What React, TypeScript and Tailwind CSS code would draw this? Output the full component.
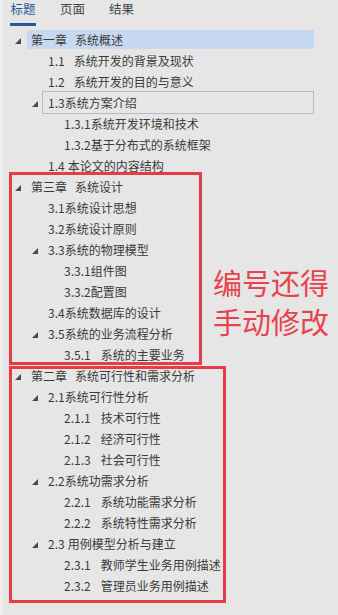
import React from 'react';

type Item = {
  level: 1 | 2 | 3;
  num: string;
  title: string;
  gap?: string;
  open?: boolean;
  selected?: boolean;
  focused?: boolean;
};

const items: Item[] = [
  { level: 1, num: '第一章', title: '系统概述', gap: 'ml-[8px]', open: true, selected: true },
  { level: 2, num: '1.1', title: '系统开发的背景及现状', gap: 'ml-[9px]' },
  { level: 2, num: '1.2', title: '系统开发的目的与意义', gap: 'ml-[9px]' },
  { level: 2, num: '1.3', title: '系统方案介绍', open: true, focused: true },
  { level: 3, num: '1.3.1', title: '系统开发环境和技术' },
  { level: 3, num: '1.3.2', title: '基于分布式的系统框架' },
  { level: 2, num: '1.4', title: '本论文的内容结构', gap: 'ml-[3px]' },
  { level: 1, num: '第三章', title: '系统设计', gap: 'ml-[8px]', open: true },
  { level: 2, num: '3.1', title: '系统设计思想' },
  { level: 2, num: '3.2', title: '系统设计原则' },
  { level: 2, num: '3.3', title: '系统的物理模型', open: true },
  { level: 3, num: '3.3.1', title: '组件图' },
  { level: 3, num: '3.3.2', title: '配置图' },
  { level: 2, num: '3.4', title: '系统数据库的设计' },
  { level: 2, num: '3.5', title: '系统的业务流程分析', open: true },
  { level: 3, num: '3.5.1', title: '系统的主要业务', gap: 'ml-[10px]' },
  { level: 1, num: '第二章', title: '系统可行性和需求分析', gap: 'ml-[8px]', open: true },
  { level: 2, num: '2.1', title: '系统可行性分析', open: true },
  { level: 3, num: '2.1.1', title: '技术可行性', gap: 'ml-[10px]' },
  { level: 3, num: '2.1.2', title: '经济可行性', gap: 'ml-[10px]' },
  { level: 3, num: '2.1.3', title: '社会可行性', gap: 'ml-[10px]' },
  { level: 2, num: '2.2', title: '系统功需求分析', open: true },
  { level: 3, num: '2.2.1', title: '系统功能需求分析', gap: 'ml-[10px]' },
  { level: 3, num: '2.2.2', title: '系统特性需求分析', gap: 'ml-[10px]' },
  { level: 2, num: '2.3', title: '用例模型分析与建立', gap: 'ml-[3px]', open: true },
  { level: 3, num: '2.3.1', title: '教师学生业务用例描述', gap: 'ml-[10px]' },
  { level: 3, num: '2.3.2', title: '管理员业务用例描述', gap: 'ml-[10px]' },
];

// left padding of the expander slot, per level (page has a 3px strip on the left)
const indent = { 1: 'pl-[6px]', 2: 'pl-[23px]', 3: 'pl-[39px]' };

function Expander() {
  return (
    <svg width="6" height="6" viewBox="0 0 6 6" className="ml-[6px] mt-[2px]">
      <polygon points="6,0 6,6 0,6" fill="#4a4a4a" />
    </svg>
  );
}

function Row({ item }: { item: Item }) {
  return (
    <div className={`flex h-[21px] items-center pr-[24px] ${indent[item.level]}`}>
      <div className="flex h-full w-[16px] shrink-0 items-center">
        {item.open && <Expander />}
      </div>
      <div
        className={
          item.selected
            ? 'ml-[2px] flex h-[19px] flex-1 items-center bg-[#c6d9f1] pl-[4px]'
            : item.focused
              ? 'flex h-[23px] flex-1 items-center border border-[#b5b9cb] pl-[5px]'
              : 'flex h-full flex-1 items-center pl-[6px]'
        }
      >
        <span className="whitespace-nowrap">{item.num}</span>
        <span className={`whitespace-nowrap ${item.gap ?? ''}`}>{item.title}</span>
      </div>
    </div>
  );
}

export default function App() {
  return (
    <div className="flex h-[615px] w-[338px] overflow-hidden bg-[#e6e6e6] font-['Noto_Sans_CJK_SC',sans-serif] text-[12px] leading-[16px] text-[#3a3a3a]">
      <div className="w-[3px] shrink-0 bg-[#eeeeee]" />
      <div className="relative flex-1">
        <div className="flex h-[29px] gap-[24px] pl-[7px] pt-px text-[12.5px]">
          <div className="flex w-[26px] flex-col items-center">
            <span className="text-[#2b579a]">标题</span>
            <div className="mt-[6px] h-[3px] w-[26px] bg-[#2b579a]" />
          </div>
          <span className="text-[#444]">页面</span>
          <span className="text-[#444]">结果</span>
        </div>

        <div className="flex flex-col">
          {items.map((item, i) => (
            <Row key={i} item={item} />
          ))}
        </div>

        {/* hand drawn annotations */}
        <div className="absolute left-[6px] top-[172px] h-[193px] w-[193px] border-[3px] border-[#e63c48]" />
        <div className="absolute left-[6px] top-[366px] h-[237px] w-[217px] border-[3px] border-[#e63c48]" />
        <div className="absolute left-[210px] top-[263px] text-[29px] leading-[39px] text-[#e8434d]">
          <div>编号还得</div>
          <div>手动修改</div>
        </div>
      </div>
    </div>
  );
}
